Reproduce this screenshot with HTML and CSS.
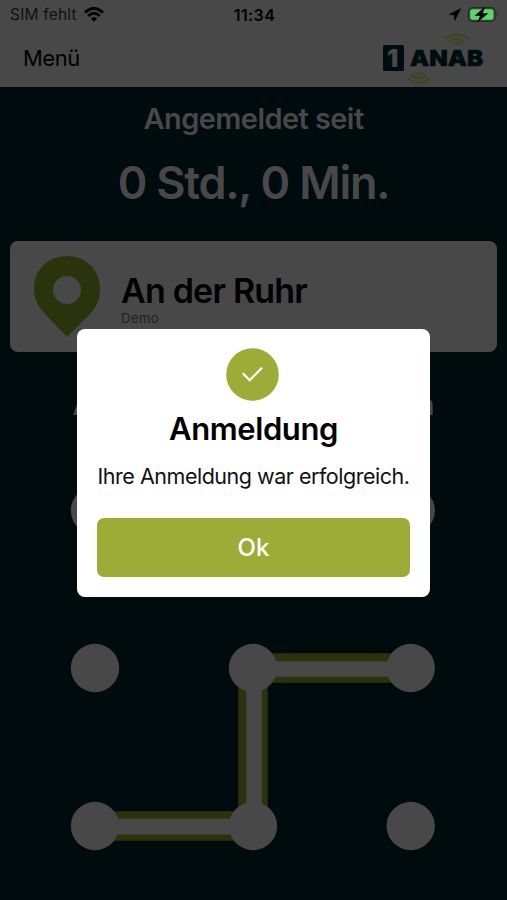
FILE: index.html
```html
<!DOCTYPE html>
<html lang="de">
<head>
<meta charset="utf-8">
<meta name="viewport" content="width=device-width, initial-scale=1">
<title>Anmeldung</title>
<link rel="stylesheet" href="styles.css">
</head>
<body>
<div class="screen">
  <header class="header">
    <div class="status">
      <div class="carrier"><span class="carrier-name">SIM fehlt</span>
        <svg class="wifi" width="20" height="15" viewBox="0 0 20 15"><g fill="none" stroke="#000" stroke-width="2.7"><path d="M1 5.5Q10-2.700 19 5.500M4.200 8.900Q10 3.600 15.800 8.900"/></g><path d="M6.800 11.500Q10 8.800 13.200 11.500L10 14.700Z"/></svg>
      </div>
      <span class="clock">11:34</span>
      <div class="power">
        <svg width="12" height="13" viewBox="0 0 12 13"><path d="M11.700.600.100 6.500l5.200.4.4 5.500Z" stroke="#000" stroke-width=".6"/></svg>
        <svg width="31" height="18" viewBox="0 0 31 18"><rect x=".6" y="1.6" width="26.5" height="13.8" rx="4.2" fill="none" stroke="#272727" stroke-width="1.2"/><rect x="2.2" y="3.3" width="23.3" height="10.5" rx="2.5" fill="#5bd66b"/><path d="M29 6v5q2-2.500 0-5Z" fill="#272727"/><path d="M17 .8 6.500 9.700h5.500L9.500 16.300 20.500 7.300h-5.600Z"/></svg>
      </div>
    </div>
    <div class="nav">
      <span class="menu">Menü</span>
      <svg class="logo" width="102" height="50" viewBox="0 0 102 50">
        <rect x="1" y="11" width="21" height="26" rx="1.500" fill="#000d10"/>
        <text class="logo-one" x="5" y="33">1</text>
        <text class="logo-name" x="28" y="32" textLength="73" lengthAdjust="spacingAndGlyphs">ANAB</text>
        <g fill="none" stroke="#3c4515" stroke-width="1.800"><path d="M63 4.500Q74-3.500 86 4.500M66.500 8Q74 1.500 82.500 8M70.500 10.600Q74.500 7.500 78.500 10.600"/><path d="M25.500 44.500Q37 52.500 48 44.500M29 41Q37 47.500 44.500 41M33 38.300Q37 41.500 41 38.300"/></g>
      </svg>
    </div>
  </header>
  <main class="content">
    <p class="since">Angemeldet seit</p>
    <p class="duration">0 Std., 0 Min.</p>
    <section class="place">
      <svg class="pin" width="68" height="82" viewBox="0 0 68 82"><path fill="#2b330d" fill-rule="evenodd" d="M34 1C15 1 1 15 1 33.500C1 44 5 51 12 59L33 81Q34 82 35 81L57 59C64 51 67 44 67 33.500C67 15 53 1 34 1ZM34 21A14 14 0 1 1 34 49A14 14 0 1 1 34 21Z"/></svg>
      <div class="place-text"><strong class="place-name">An der Ruhr</strong><span class="place-tag">Demo</span></div>
    </section>
    <div class="hint"><span>A</span><span>n</span></div>
    <svg class="pattern" width="367" height="367" viewBox="0 0 367 367">
      <path d="M25 342H183V184H340" fill="none" stroke="#2b330d" stroke-width="29.500"/>
      <path d="M25 342.600H184V185H340" fill="none" stroke="#484848" stroke-width="15.600"/>
      <g fill="#484848"><circle cx="25" cy="26.500" r="24.200"/><circle cx="183" cy="26.500" r="24.200"/><circle cx="340.700" cy="26.500" r="24.200"/><circle cx="25" cy="184" r="24.200"/><circle cx="183" cy="184" r="24.200"/><circle cx="340.700" cy="184" r="24.200"/><circle cx="25" cy="342" r="24.200"/><circle cx="183" cy="342" r="24.200"/><circle cx="340.700" cy="342" r="24.200"/></g>
    </svg>
  </main>
  <div class="dialog" role="dialog">
    <svg class="check" width="55" height="53" viewBox="0 0 55 53"><circle cx="26.500" cy="26.500" r="26.300" fill="#9dac37"/><path d="M16.800 25.300 23.700 32.200 36 19.800" fill="none" stroke="#fff" stroke-width="2.300"/></svg>
    <h1 class="dialog-title">Anmeldung</h1>
    <p class="dialog-text">Ihre Anmeldung war erfolgreich.</p>
    <button class="ok">Ok</button>
  </div>
</div>
</body>
</html>
```
FILE: styles.css
```css
* { box-sizing: border-box; }
body { margin: 0; font-family: Inter, "Liberation Sans", sans-serif; color: #000; }
p, h1 { margin: 0; }
svg { display: block; flex: none; }
.screen { position: relative; width: 507px; height: 900px; overflow: hidden; background: #000b0e; white-space: nowrap; }
.header { height: 87px; background: #484848; }
.status { display: grid; grid-template-columns: 1fr auto 1fr; align-items: center; height: 29px; padding: 0 8px 0 10px; }
.carrier { display: flex; align-items: center; gap: 7px; }
.carrier-name { color: #111; font-size: 15.500px; letter-spacing: .2px; }
.clock { font-size: 16px; font-weight: 600; letter-spacing: .4px; }
.power { display: flex; justify-content: flex-end; align-items: center; gap: 7px; }
.nav { display: flex; justify-content: space-between; height: 58px; padding: 0 23px; }
.menu { font-size: 22px; line-height: 58px; letter-spacing: -.5px; }
.logo { margin-top: 5px; }
.logo-one { font-size: 25px; font-weight: 900; fill: #484848; }
.logo-name { font-size: 22px; font-weight: 900; fill: #000d10; stroke: #000d10; stroke-width: .5px; }
.content { display: flex; flex-direction: column; align-items: center; color: #48484a; }
.since { margin-top: 12px; font-size: 29px; line-height: 40px; font-weight: 600; letter-spacing: -.57px; }
.duration { margin-top: 14px; font-size: 45px; line-height: 60px; font-weight: 600; letter-spacing: -1.250px; }
.place { display: flex; width: 487px; height: 111px; margin-top: 28px; padding: 14px 23px; border-radius: 8px; background: #484848; }
.place-text { display: flex; flex-direction: column; margin: 16px 0 0 20px; }
.place-name { color: #000; font-size: 34px; line-height: 40px; font-weight: 600; letter-spacing: -.8px; }
.place-tag { color: #202020; font-size: 13px; line-height: 14px; letter-spacing: .5px; }
.hint { display: flex; justify-content: space-between; width: 362px; height: 40px; margin-top: 33px; font-size: 29px; line-height: 40px; font-weight: 600; }
.pattern { margin-top: 59px; }
.dialog { position: absolute; left: 77px; top: 329px; width: 353px; height: 268px; padding: 19px 20px 20px; border-radius: 8px; background: #fff; display: flex; flex-direction: column; align-items: center; }
.dialog-title { margin-top: 8px; font-size: 31px; line-height: 40px; font-weight: 600; letter-spacing: -.4px; }
.dialog-text { margin-top: 12px; font-size: 21.500px; line-height: 30px; letter-spacing: -.48px; color: #111; }
.ok { width: 313px; height: 59px; margin-top: 27px; padding: 0; border: 0; border-radius: 7px; background: #9dac37; color: #fff; font: 500 24px Inter, sans-serif; }
```
